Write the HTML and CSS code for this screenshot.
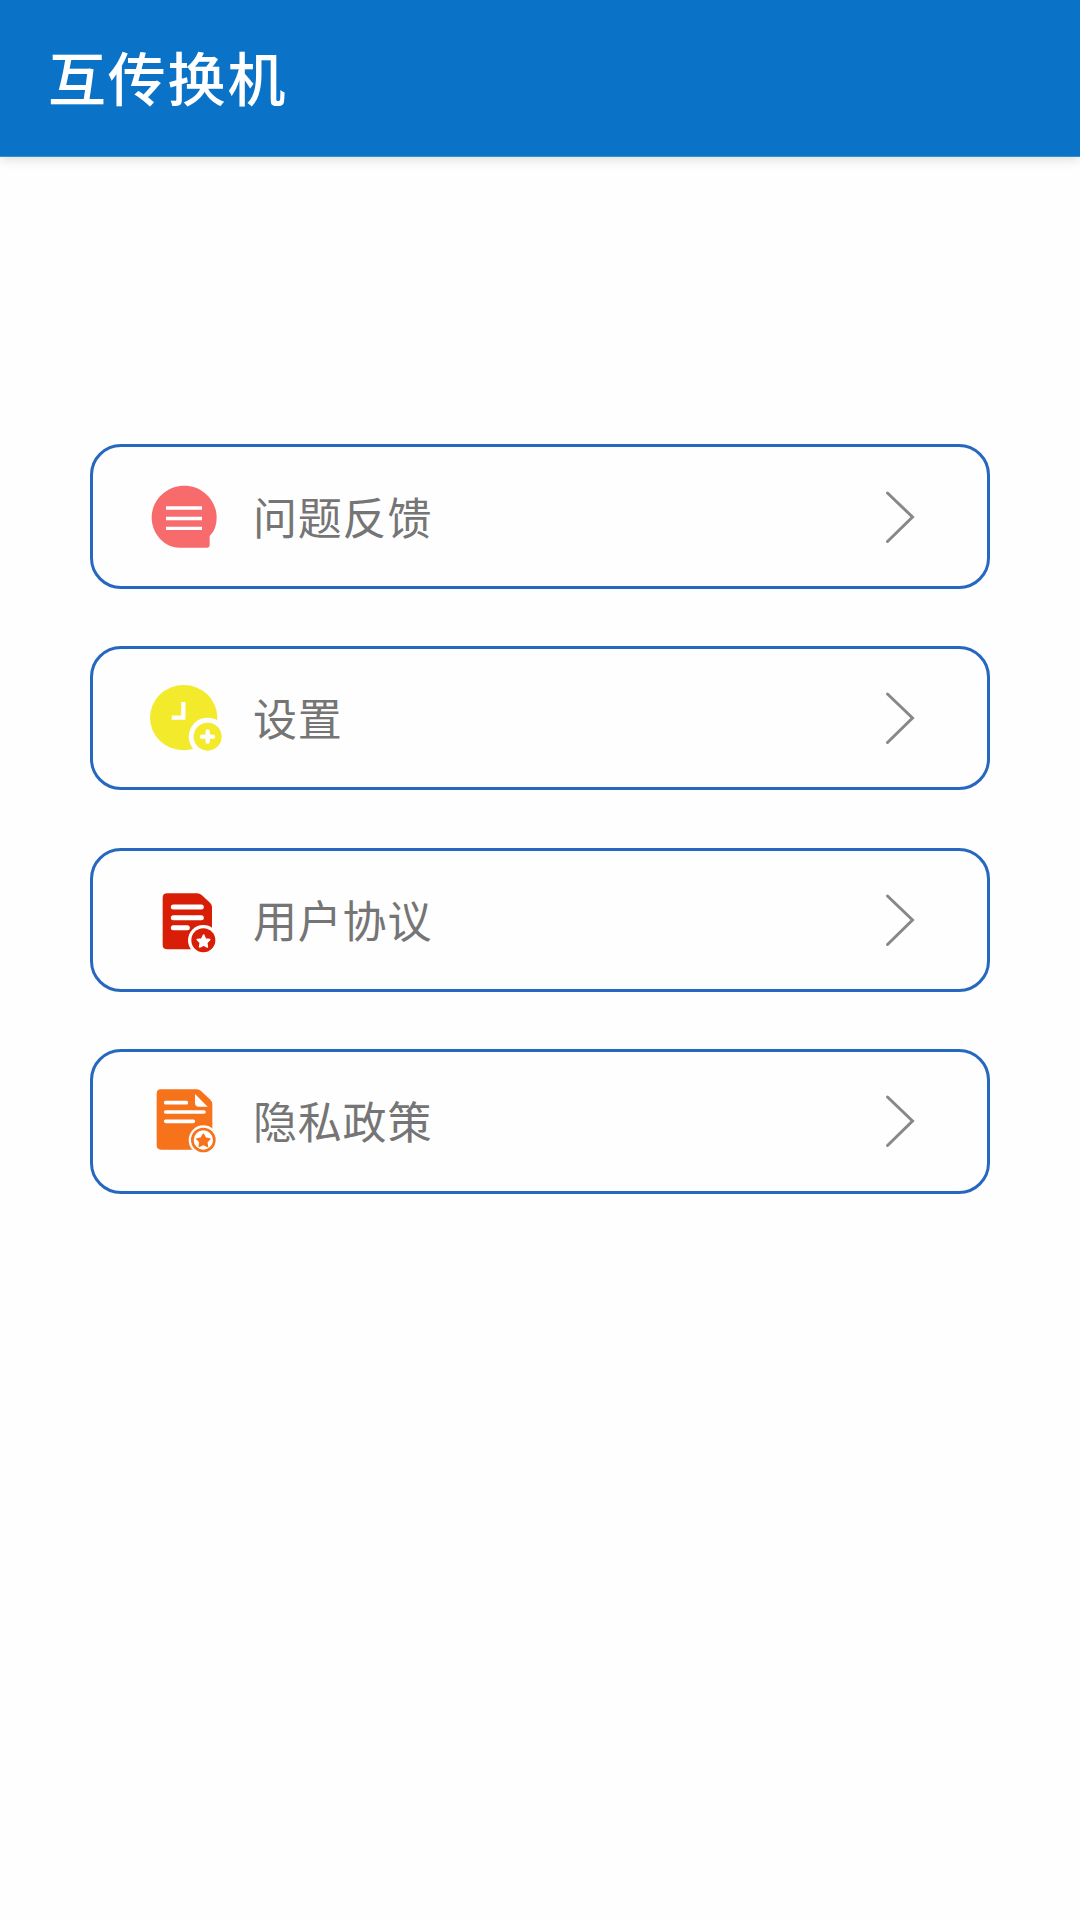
FILE: index.html
```
<!DOCTYPE html>
<html lang="zh-CN">
<head>
    <meta charset="UTF-8">
    <meta name="viewport" content="width=device-width, initial-scale=1.0">
    <title>互传换机</title>
    <link rel="stylesheet" href="styles.css">
</head>
<body>
    <header class="topbar">
        <h1>互传换机</h1>
    </header>

    <main class="menu">
        <div class="item">
            <svg class="icon" viewBox="0 -3 270 252">
                <path fill="#f86b6d" d="M133 29C79 29 35 72 35 125C35 172 74 215 117 215H202Q209 215 209 208V180Q230 160 230 125C230 72 187 29 133 29Z"/>
                <path stroke="#fff" stroke-width="10" d="M78 96H186M78 127.500H186M78 157H186"/>
            </svg>
            <span class="label">问题反馈</span>
            <svg class="arrow" viewBox="0 0 30 54"><path d="M2.500 3L27.500 27L2.500 51.500"/></svg>
        </div>

        <div class="item">
            <svg class="icon" viewBox="0 3 270 252">
                <ellipse cx="131" cy="128" rx="101" ry="98" fill="#f3ea2b"/>
                <path fill="none" stroke="#fff" stroke-width="13" d="M130 81V128H95"/>
                <circle cx="203" cy="185" r="57" fill="#fefefe"/>
                <circle cx="203" cy="185" r="42" fill="#f3ea2b"/>
                <path stroke="#fff" stroke-width="13" stroke-linecap="round" d="M186 185H219M203 169V200"/>
            </svg>
            <span class="label">设置</span>
            <svg class="arrow" viewBox="0 0 30 54"><path d="M2.500 3L27.500 27L2.500 51.500"/></svg>
        </div>

        <div class="item">
            <svg class="icon" viewBox="0 -8 270 252">
                <path fill="#d81e06" d="M82 38H171Q179 38 185 43L210 66Q216 71 216 79V206H82Q68 206 68 193V51Q68 38 82 38Z"/>
                <path stroke="#fff" stroke-width="15" stroke-linecap="round" d="M100 79H184M100 111H184M100 141H142"/>
                <circle cx="190" cy="179" r="46" fill="#fefefe"/>
                <circle cx="190" cy="179" r="36" fill="#d81e06"/>
                <path fill="#fff" stroke="#fff" stroke-width="5" stroke-linejoin="round" d="M191 163L196 175L209 177L200 186L202 199L191 193L179 199L181 186L172 177L185 175Z"/>
            </svg>
            <span class="label">用户协议</span>
            <svg class="arrow" viewBox="0 0 30 54"><path d="M2.500 3L27.500 27L2.500 51.500"/></svg>
        </div>

        <div class="item">
            <svg class="icon" viewBox="0 -2 270 252">
                <path fill="#f6721b" d="M63 29H170Q178 29 184 35L211 60Q217 66 217 74V210H63Q50 210 50 197V42Q50 29 63 29Z"/>
                <path fill="#fff" d="M165 43L203 81H176Q165 81 165 70Z"/>
                <path stroke="#fff" stroke-width="11" stroke-linecap="round" d="M77 69H139M77 97H192M77 125H160"/>
                <circle cx="190" cy="181" r="44" fill="#fefefe"/>
                <circle cx="190" cy="181" r="33" fill="#fff" stroke="#f6721b" stroke-width="8"/>
                <path fill="#f6721b" stroke="#f6721b" stroke-width="5" stroke-linejoin="round" d="M190 164L196 175L209 178L200 187L202 200L190 194L178 200L180 187L171 178L184 175Z"/>
            </svg>
            <span class="label">隐私政策</span>
            <svg class="arrow" viewBox="0 0 30 54"><path d="M2.500 3L27.500 27L2.500 51.500"/></svg>
        </div>
    </main>
</body>
</html>
```
FILE: styles.css
```
* {
    box-sizing: border-box;
}

body {
    margin: 0;
    min-height: 100vh;
    background-color: #fefefe;
    font-family: "Noto Sans CJK SC", sans-serif;
}

.topbar {
    height: 157px;
    padding: 0 0 5px 48px;
    display: flex;
    align-items: center;
    background-color: #0a73c7;
    border-bottom: 1px solid #3c8cc4;
    box-shadow: 0 3px 10px rgba(0, 0, 0, 0.12);
}

h1 {
    margin: 0;
    font-size: 58px;
    font-weight: 500;
    line-height: 88px;
    letter-spacing: 1.8px;
    color: #fff;
}

.menu {
    display: flex;
    flex-direction: column;
    gap: 57.2px;
    padding: 287.4px 90px 0;
}

.item {
    display: flex;
    align-items: center;
    height: 144.4px;
    padding: 0 72px 0 47px;
    border: 3px solid #2667bf;
    border-radius: 31px;
}

.icon {
    width: 90px;
    height: 84px;
}

.label {
    flex: 1;
    margin-left: 23px;
    padding-bottom: 2px;
    font-size: 44px;
    line-height: 64px;
    letter-spacing: 0.8px;
    color: #757575;
}

.arrow {
    width: 30px;
    height: 54px;
    fill: none;
    stroke: #888;
    stroke-width: 3;
    stroke-linecap: round;
}
```
